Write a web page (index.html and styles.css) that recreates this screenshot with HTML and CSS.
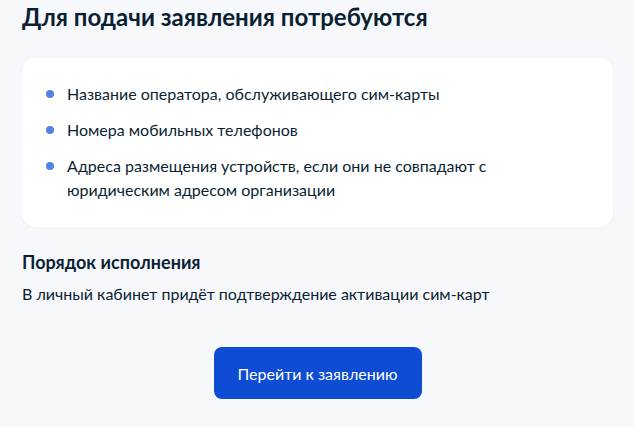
FILE: index.html
```html
<!DOCTYPE html>
<html lang="ru">
<head>
<meta charset="utf-8">
<link rel="stylesheet" href="styles.css">
</head>
<body>
<main class="page">
  <h2 class="title">Для подачи заявления потребуются</h2>
  <section class="card">
    <ul class="list">
      <li class="item">Название оператора, обслуживающего сим-карты</li>
      <li class="item">Номера мобильных телефонов</li>
      <li class="item">Адреса размещения устройств, если они не совпадают с юридическим адресом организации</li>
    </ul>
  </section>
  <h3 class="subtitle">Порядок исполнения</h3>
  <p class="text">В личный кабинет придёт подтверждение активации сим-карт</p>
  <div class="actions">
    <button class="btn">Перейти к заявлению</button>
  </div>
</main>
</body>
</html>
```
FILE: styles.css
```css
html, body {
  margin: 0;
  padding: 0;
  background: #f6f8fc;
  font-family: Lato, "Noto Sans", sans-serif;
  color: #0b1f33;
}
.page {
  padding: 1px 21px 0 22px;
}
.title {
  margin: 0;
  font-size: 24px;
  line-height: 32px;
  font-weight: 700;
}
.card {
  margin-top: 25px;
  background: #fff;
  border-radius: 14px;
  box-shadow: 0 1px 4px rgba(11, 31, 51, 0.04);
  padding: 24px 24px 25px 24px;
}
.list {
  list-style: none;
  margin: 0;
  padding: 0;
  display: flex;
  flex-direction: column;
  gap: 12px;
}
.item {
  position: relative;
  padding-left: 21px;
  font-size: 16px;
  line-height: 24px;
  max-width: 460px;
}
.item::before {
  content: "";
  position: absolute;
  left: 0;
  top: 8px;
  width: 8px;
  height: 8px;
  border-radius: 50%;
  background: #4f7fe9;
}
.subtitle {
  margin: 23px 0 0 0;
  font-size: 18px;
  line-height: 24px;
  font-weight: 700;
}
.text {
  margin: 8px 0 0 0;
  font-size: 16px;
  line-height: 24px;
}
.actions {
  display: flex;
  justify-content: center;
  margin-top: 41px;
}
.btn {
  width: 208px;
  height: 52px;
  border: none;
  border-radius: 8px;
  background: #0d4cd3;
  color: #fff;
  font-family: inherit;
  font-size: 16px;
}
```
